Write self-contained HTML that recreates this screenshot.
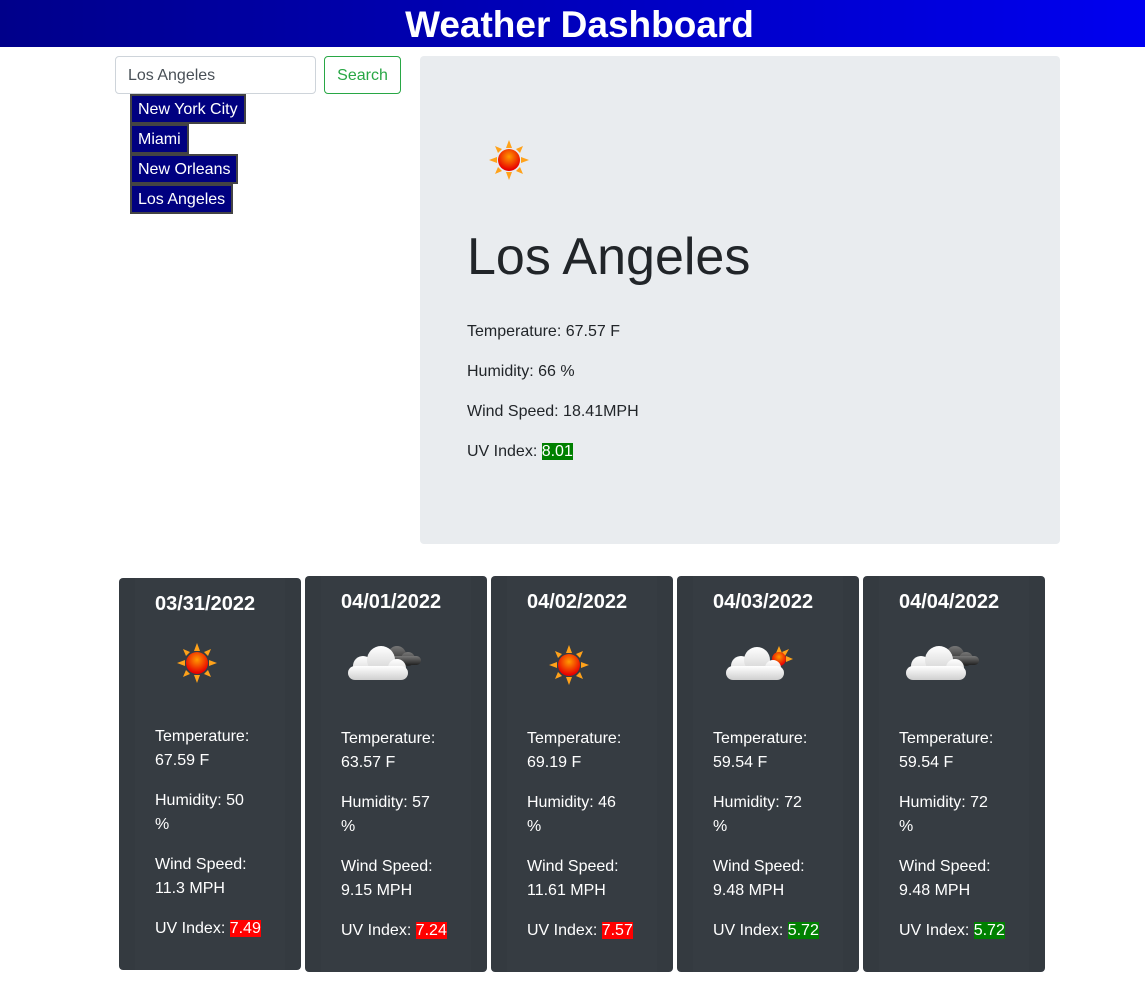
<!DOCTYPE html>
<html><head><meta charset="utf-8"><style>
*{box-sizing:border-box}
body{margin:0;width:1145px;height:988px;background:#fff;font-family:"Liberation Sans",sans-serif;color:#212529;position:relative;overflow:hidden}
.hdr{position:absolute;left:0;top:0;width:1145px;height:47px;background:linear-gradient(90deg,#00008a,#0000f0);color:#fff;text-align:center;font-weight:bold;font-size:37px;line-height:49px;padding-left:14px}
.inp{position:absolute;left:115px;top:56px;width:201px;height:38px;border:1px solid #ced4da;border-radius:4px;font-size:16px;color:#495057;padding:0 12px;line-height:38px}
.btn{position:absolute;left:324px;top:56px;width:77px;height:38px;border:1px solid #28a745;border-radius:4px;color:#28a745;font-size:16px;text-align:center;line-height:38px}
.hist{position:absolute;left:130px;height:30px;background:#000080;color:#fff;border:2px solid #444;font-size:16px;line-height:28px;padding:0 6px}
.jum{position:absolute;left:420px;top:56px;width:640px;height:488px;background:#e9ecef;border-radius:4px}
.jum h1{position:absolute;left:47px;top:171px;margin:0;font-size:52px;font-weight:300;white-space:nowrap}
.jum p{position:absolute;left:47px;margin:0;font-size:16px;line-height:26px}
.card{position:absolute;width:182px;background:#343a40;border-radius:4px;color:#fff}
.card .in{position:absolute;left:16px;right:16px;top:0;bottom:0;background:#363c42}
.card .d{position:absolute;left:36px;font-size:20px;font-weight:bold;}
.card p{position:absolute;left:36px;margin:0;font-size:16px;line-height:24px;width:120px}
.card svg{position:absolute}
.r{background:#f00;color:#fff}.g{background:#008000;color:#fff}
</style></head><body>
<svg width="0" height="0" style="position:absolute"><defs>
<radialGradient id="sg" cx="50%" cy="35%" r="60%"><stop offset="0" stop-color="#ff9a00"/><stop offset="1" stop-color="#e80000"/></radialGradient>
<linearGradient id="cg" x1="0" y1="0" x2="0" y2="1"><stop offset="0" stop-color="#ffffff"/><stop offset="1" stop-color="#cfcfcf"/></linearGradient>
<linearGradient id="dg" x1="0" y1="0" x2="0" y2="1"><stop offset="0" stop-color="#777"/><stop offset="1" stop-color="#222"/></linearGradient>
<symbol id="sun" viewBox="0 0 50 50"><g fill="#ffa21a"><polygon points="25,5 22,13 28,13"/><polygon points="25,45 22,37 28,37"/><polygon points="5,25 13,22 13,28"/><polygon points="45,25 37,22 37,28"/><polygon points="11,11 14,18 18,14"/><polygon points="39,11 32,14 36,18"/><polygon points="11,39 18,36 14,32"/><polygon points="39,39 36,32 32,36"/></g><circle cx="25" cy="25" r="11" fill="url(#sg)"/></symbol>
<symbol id="cloud" viewBox="0 0 80 50"><g fill="url(#dg)"><circle cx="52" cy="17" r="9"/><circle cx="63" cy="21" r="7"/><rect x="46" y="18" width="30" height="9" rx="4.5"/></g><g fill="url(#cg)"><circle cx="18" cy="28" r="10"/><circle cx="36" cy="22" r="14"/><circle cx="52" cy="30" r="9"/><rect x="3" y="28" width="60" height="14" rx="7"/></g></symbol>
<symbol id="pc" viewBox="0 0 80 50"><polygon points="56,8 53,15 59,15" fill="#ffa21a"/><polygon points="70,21 63,18 63,24" fill="#ffa21a"/><polygon points="66,11 59,14 62,18" fill="#ffa21a"/><circle cx="56" cy="21" r="7" fill="url(#sg)"/><g fill="url(#cg)"><circle cx="18" cy="28" r="10"/><circle cx="34" cy="22" r="13"/><circle cx="50" cy="30" r="8"/><rect x="3" y="28" width="58" height="14" rx="7"/></g></symbol>
</defs></svg>
<div class="hdr">Weather Dashboard</div>
<div class="inp">Los Angeles</div>
<div class="btn">Search</div>
<div class="hist" style="top:94px">New York City</div>
<div class="hist" style="top:124px">Miami</div>
<div class="hist" style="top:154px">New Orleans</div>
<div class="hist" style="top:184px">Los Angeles</div>
<div class="jum">
<svg style="position:absolute;left:64px;top:79px" width="50" height="50"><use href="#sun"/></svg>
<h1>Los Angeles</h1>
<p style="top:263px">Temperature: 67.57 F</p>
<p style="top:303px">Humidity: 66 %</p>
<p style="top:343px">Wind Speed: 18.41MPH</p>
<p style="top:383px">UV Index: <span class="g">8.01</span></p>
</div>

<div class="card" style="left:119px;top:578px;height:392px"><div class="in"></div>
<div class="d" style="top:15px">03/31/2022</div>
<svg style="left:53px;top:60px" width="50" height="50"><use href="#sun"/></svg>
<p style="top:147px">Temperature:<br>67.59 F</p><p style="top:211px">Humidity: 50<br>%</p><p style="top:275px">Wind Speed:<br>11.3 MPH</p><p style="top:339px">UV Index: <span class="r">7.49</span></p></div>

<div class="card" style="left:305px;top:576px;height:396px"><div class="in"></div>
<div class="d" style="top:15px">04/01/2022</div>
<svg style="left:40px;top:62px" width="80" height="50"><use href="#cloud"/></svg>
<p style="top:151px">Temperature:<br>63.57 F</p><p style="top:215px">Humidity: 57<br>%</p><p style="top:279px">Wind Speed:<br>9.15 MPH</p><p style="top:343px">UV Index: <span class="r">7.24</span></p></div>

<div class="card" style="left:491px;top:576px;height:396px"><div class="in"></div>
<div class="d" style="top:15px">04/02/2022</div>
<svg style="left:53px;top:64px" width="50" height="50"><use href="#sun"/></svg>
<p style="top:151px">Temperature:<br>69.19 F</p><p style="top:215px">Humidity: 46<br>%</p><p style="top:279px">Wind Speed:<br>11.61 MPH</p><p style="top:343px">UV Index: <span class="r">7.57</span></p></div>

<div class="card" style="left:677px;top:576px;height:396px"><div class="in"></div>
<div class="d" style="top:15px">04/03/2022</div>
<svg style="left:46px;top:62px" width="80" height="50"><use href="#pc"/></svg>
<p style="top:151px">Temperature:<br>59.54 F</p><p style="top:215px">Humidity: 72<br>%</p><p style="top:279px">Wind Speed:<br>9.48 MPH</p><p style="top:343px">UV Index: <span class="g">5.72</span></p></div>

<div class="card" style="left:863px;top:576px;height:396px"><div class="in"></div>
<div class="d" style="top:15px">04/04/2022</div>
<svg style="left:40px;top:62px" width="80" height="50"><use href="#cloud"/></svg>
<p style="top:151px">Temperature:<br>59.54 F</p><p style="top:215px">Humidity: 72<br>%</p><p style="top:279px">Wind Speed:<br>9.48 MPH</p><p style="top:343px">UV Index: <span class="g">5.72</span></p></div>
</body></html>
